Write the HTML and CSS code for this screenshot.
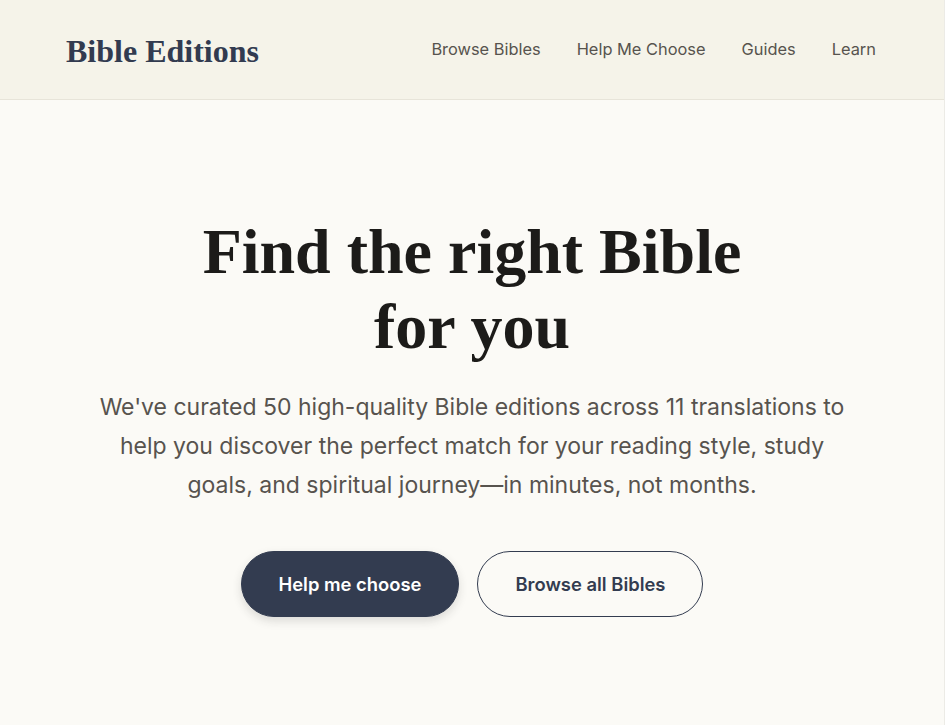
FILE: index.html
```html
<!DOCTYPE html>
<html lang="en">
<head>
<meta charset="utf-8">
<title>Bible Editions</title>
<link rel="stylesheet" href="styles.css">
</head>
<body>
<header class="site-header">
  <div class="header-inner">
    <a class="logo" href="#">Bible Editions</a>
    <nav class="nav">
      <a href="#">Browse Bibles</a>
      <a href="#">Help Me Choose</a>
      <a href="#">Guides</a>
      <a href="#">Learn</a>
    </nav>
  </div>
</header>
<main class="hero">
  <h1 class="hero-title">Find the right Bible<br>for you</h1>
  <p class="hero-text">We've curated 50 high-quality Bible editions across 11 translations to help you discover the perfect match for your reading style, study goals, and spiritual journey—in minutes, not months.</p>
  <div class="actions">
    <a class="btn btn-primary" href="#">Help me choose</a>
    <a class="btn btn-outline" href="#">Browse all Bibles</a>
  </div>
</main>
</body>
</html>
```

FILE: styles.css
```css
* { box-sizing: border-box; }
html, body { margin: 0; padding: 0; }
body {
  background: #fbfaf6;
  font-family: Inter, "Liberation Sans", sans-serif;
  color: #1c1b19;
  min-height: 725px;
  border-right: 1px solid #ecebe6;
}
a { text-decoration: none; color: inherit; }

.site-header {
  background: #f5f3e9;
  border-bottom: 1px solid #e7e4d9;
}
.header-inner {
  height: 99px;
  padding: 0 68px 0 66px;
  display: flex;
  align-items: center;
  justify-content: space-between;
}
.logo {
  font-family: "Liberation Serif", "Times New Roman", serif;
  font-weight: 700;
  font-size: 32px;
  color: #323b50;
  margin-top: 3px;
}
.nav {
  display: flex;
  gap: 36px;
  margin-bottom: 2px;
}
.nav a {
  font-size: 16.4px;
  color: #57534e;
}

.hero {
  display: flex;
  flex-direction: column;
  align-items: center;
  text-align: center;
  padding-top: 114px;
}
.hero-title {
  margin: 0;
  font-family: "Liberation Serif", "Times New Roman", serif;
  font-weight: 700;
  font-size: 64px;
  line-height: 75px;
  color: #1c1b19;
}
.hero-text {
  margin: 24px 0 0;
  max-width: 768px;
  font-size: 23px;
  line-height: 39px;
  color: #57534e;
}
.actions {
  display: flex;
  gap: 18px;
  margin-top: 46px;
}
.btn {
  display: inline-block;
  height: 66px;
  line-height: 64px;
  border-radius: 33px;
  font-size: 18.4px;
  font-weight: 600;
  padding: 0 37px;
  border: 1px solid #333c50;
}
.btn-primary {
  background: #333c50;
  color: #ffffff;
  box-shadow: 0 4px 10px rgba(40, 40, 40, 0.15);
}
.btn-outline {
  background: transparent;
  color: #333c50;
}
```
